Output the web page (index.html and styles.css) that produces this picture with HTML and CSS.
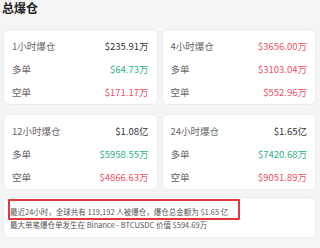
FILE: index.html
```html
<!DOCTYPE html>
<html lang="zh">
<head>
<meta charset="utf-8">
<link rel="stylesheet" href="styles.css">
</head>
<body>
<h1 class="title">总爆仓</h1>
<div class="grid">
  <div class="card">
    <div class="row"><span class="label">1小时爆仓</span><span class="val">$235.91万</span></div>
    <div class="row"><span class="label">多单</span><span class="val up">$64.73万</span></div>
    <div class="row"><span class="label">空单</span><span class="val down">$171.17万</span></div>
  </div>
  <div class="card">
    <div class="row"><span class="label">4小时爆仓</span><span class="val down">$3656.00万</span></div>
    <div class="row"><span class="label">多单</span><span class="val down">$3103.04万</span></div>
    <div class="row"><span class="label">空单</span><span class="val down">$552.96万</span></div>
  </div>
  <div class="card">
    <div class="row"><span class="label">12小时爆仓</span><span class="val">$1.08亿</span></div>
    <div class="row"><span class="label">多单</span><span class="val up">$5958.55万</span></div>
    <div class="row"><span class="label">空单</span><span class="val down">$4866.63万</span></div>
  </div>
  <div class="card">
    <div class="row"><span class="label">24小时爆仓</span><span class="val">$1.65亿</span></div>
    <div class="row"><span class="label">多单</span><span class="val up">$7420.68万</span></div>
    <div class="row"><span class="label">空单</span><span class="val down">$9051.89万</span></div>
  </div>
</div>
<div class="note">
  <p class="line">最近24小时，全球共有 119,192 人被爆仓，爆仓总金额为 $1.65 亿</p>
  <p class="line">最大单笔爆仓单发生在 Binance - BTCUSDC 价值 $594.69万</p>
  <div class="highlight"></div>
</div>
</body>
</html>
```
FILE: styles.css
```css
html, body {
  margin: 0;
  padding: 0;
}
body {
  background: #f5f5f5;
  font-family: "Noto Sans CJK SC", "Noto Sans", sans-serif;
  color: #333;
  width: 320px;
  height: 248px;
  overflow: hidden;
}
.title {
  margin: 0;
  padding: 0 2px;
  font-size: 12px;
  line-height: 16px;
  font-weight: 700;
  color: #222;
  height: 16px;
}
.grid {
  display: grid;
  grid-template-columns: 1fr 1fr;
  gap: 9px 4px;
  margin: 13px 4px 0 3px;
}
.card {
  background: #fff;
  border: 1px solid #ececec;
  border-radius: 6px;
  padding: 7px 8px 3px 8px;
  display: flex;
  flex-direction: column;
  gap: 5px;
}
.row {
  display: flex;
  justify-content: space-between;
  align-items: center;
  height: 18px;
  font-size: 9.5px;
}
.label {
  color: #666;
}
.val {
  color: #333;
}
.up {
  color: #2bb38a;
}
.down {
  color: #ef5066;
}
.note {
  position: relative;
  background: #fff;
  border: 1px solid #ececec;
  border-radius: 6px;
  margin: 7px 4px 0 3px;
  padding: 7px 6px 5px 6px;
  height: 27px;
}
.line {
  margin: 0;
  font-size: 7.5px;
  line-height: 13px;
  color: #555;
  white-space: nowrap;
}
.highlight {
  position: absolute;
  left: 4px;
  top: 1px;
  width: 228px;
  height: 17px;
  border: 2px solid #e0383e;
  border-radius: 1px;
}
```
